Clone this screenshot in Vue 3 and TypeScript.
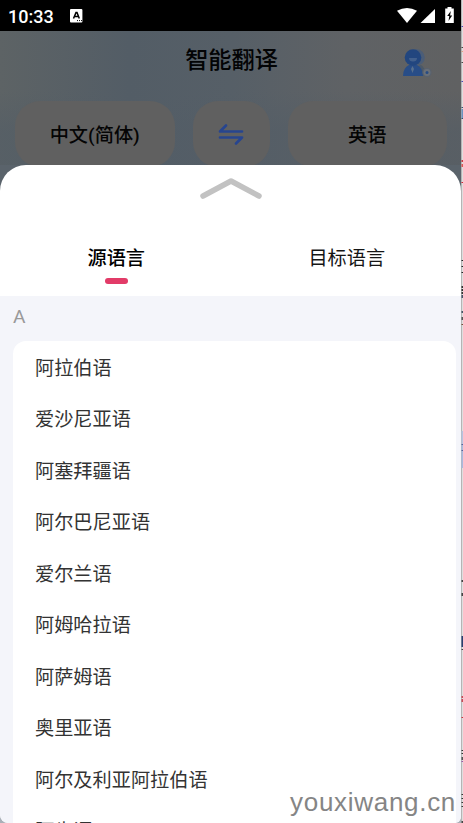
<script setup lang="ts">
const languages: string[] = [
  '阿拉伯语', '爱沙尼亚语', '阿塞拜疆语', '阿尔巴尼亚语', '爱尔兰语',
  '阿姆哈拉语', '阿萨姆语', '奥里亚语', '阿尔及利亚阿拉伯语', '阿肯语',
]
interface Mark { y: number; h: number; c: string }
const marks: Mark[] = [
  { y: 26, h: 1, c: '#4a48b0' }, { y: 47, h: 1, c: '#444' }, { y: 51, h: 1, c: '#d9a184' },
  { y: 62, h: 1, c: '#444' }, { y: 81, h: 1, c: '#4a48b0' }, { y: 107, h: 1, c: '#34506e' },
  { y: 109, h: 9, c: '#6b93bf' }, { y: 118, h: 1, c: '#34506e' }, { y: 160, h: 2, c: '#c93a42' },
  { y: 164, h: 3, c: '#d55' }, { y: 182, h: 1, c: '#d02030' }, { y: 260, h: 1, c: '#222' },
  { y: 266, h: 1, c: '#222' }, { y: 272, h: 1, c: '#222' }, { y: 286, h: 2, c: '#333' },
  { y: 289, h: 2, c: '#333' }, { y: 292, h: 2, c: '#333' }, { y: 295, h: 3, c: '#48536a' },
  { y: 311, h: 2, c: '#456' }, { y: 317, h: 3, c: '#555' }, { y: 324, h: 1, c: '#754c38' },
  { y: 431, h: 13, c: '#b7c3e0' }, { y: 444, h: 1, c: '#5364a0' }, { y: 445, h: 5, c: '#aab9dd' },
  { y: 450, h: 1, c: '#5364a0' }, { y: 451, h: 17, c: '#aab9dd' }, { y: 580, h: 2, c: '#444' },
  { y: 593, h: 3, c: '#444' }, { y: 636, h: 11, c: '#293f70' }, { y: 649, h: 1, c: '#444' },
  { y: 696, h: 2, c: '#c94b58' }, { y: 699, h: 3, c: '#c94b58' }, { y: 717, h: 1, c: '#c92f3c' },
  { y: 750, h: 1, c: '#333' }, { y: 753, h: 1, c: '#333' }, { y: 757, h: 3, c: '#555' },
  { y: 761, h: 1, c: '#95a' }, { y: 794, h: 1, c: '#333' }, { y: 798, h: 1, c: '#333' },
  { y: 802, h: 1, c: '#333' }, { y: 806, h: 1, c: '#333' }, { y: 821, h: 2, c: '#444' },
]
</script>

<template>
  <div class="screen">
    <main class="phone">
      <div class="status">
        <span class="time">10:33</span>
        <svg class="app-badge" width="13" height="14" viewBox="0 0 13 14">
          <rect width="12.4" height="13.4" rx="1" fill="#fff" />
          <path d="M3.5 9.5 6 3.6h1l2.3 5.9M4.5 7.4h4" fill="none" stroke="#000" stroke-width="1.5" />
          <path d="M7 11.6h1m1 0h1m1 0h1" stroke="#000" />
        </svg>
        <svg class="signals" width="58" height="17" viewBox="0 0 58 17">
          <path d="M0 3.8Q10 -1.8 20 3.8L10 16Z" fill="#fff" />
          <path d="M38 2v14H23.5Z" fill="#fff" />
          <path d="M50.5 0h4v1.5h2.3V16h-8.6V1.5h2.3Z" fill="#fff" />
          <path d="M53.8 4 50.2 9h2.1L51.5 14l3.7-5.5h-2.1Z" fill="#000" />
        </svg>
      </div>
      <section class="backdrop">
        <header>
          <h1>智能翻译</h1>
          <svg class="user" width="34" height="34" viewBox="0 0 34 34">
            <circle cx="16.5" cy="11.5" r="8.3" fill="#4b5d77" />
            <path d="M13 30q1-10 8-11 4 2 5 11Z" fill="#4b5968" />
            <path d="M3 30q0-8 6-11h8q6 3 6 11Z" fill="#284d87" />
            <circle cx="13" cy="11.5" r="8.3" fill="#22467f" />
            <path d="M9 12h8q0 3.5-4 3.5T9 12Z" fill="#42608d" />
            <path d="m12.5 20 1.5 3-1.5 4-1.5-4Z" fill="#58708e" />
            <circle cx="27" cy="26.5" r="4.6" fill="#59626e" />
            <circle cx="27" cy="26.5" r="3.4" fill="#6a7078" />
            <circle cx="27" cy="26.5" r="1.5" fill="#284c83" />
          </svg>
        </header>
        <div class="pickers">
          <div class="pill">中文(简体)</div>
          <div class="pill swap">
            <svg width="28" height="24" viewBox="0 0 28 24">
              <path d="M25 9.5H3L9 3.5M3 15.5h22l-6 6" fill="none" stroke="#27458f" stroke-width="2.7" stroke-linecap="round" stroke-linejoin="round" />
            </svg>
          </div>
          <div class="pill">英语</div>
        </div>
      </section>
      <section class="sheet">
        <svg class="handle" width="64" height="25" viewBox="0 0 64 25">
          <path d="M4 21 32 6l28 15" fill="none" stroke="#c2c2c2" stroke-width="5.5" stroke-linecap="round" stroke-linejoin="round" />
        </svg>
        <nav>
          <div class="tab active">源语言</div>
          <div class="tab">目标语言</div>
        </nav>
        <div class="content">
          <div class="letter">A</div>
          <ul>
            <li v-for="name in languages" :key="name">{{ name }}</li>
          </ul>
        </div>
      </section>
    </main>
    <svg class="edge" width="2" height="823" viewBox="0 0 2 823">
      <rect width="2" height="823" fill="#dedede" />
      <rect width="1" height="823" fill="#b5b5b5" />
      <rect v-for="m in marks" :key="m.y" x="0.5" :y="m.y" width="1.5" :height="m.h" :fill="m.c" />
    </svg>
    <div class="watermark">youxiwang.cn</div>
  </div>
</template>

<style>
body { margin: 0; overflow: hidden; background: #a9b0b8; }
</style>

<style scoped>
.screen { position: relative; display: flex; width: 463px; height: 823px; overflow: hidden; font-family: Roboto, "Noto Sans CJK SC", sans-serif; }
.phone { width: 461px; height: 823px; display: flex; flex-direction: column; overflow: hidden; background: #5a636b; border-radius: 0 0 6px 8px; }
.status { height: 31px; flex: none; background: #000; color: #fff; display: flex; align-items: center; box-sizing: border-box; padding: 0 6px 0 8px; }
.time { font-size: 18px; line-height: 31px; font-weight: 500; width: 62px; padding-top: 1px; }
.signals { margin-left: auto; margin-top: -1px; }
.backdrop { height: 134px; flex: none; background: linear-gradient(90deg, #5d6365 0, #535d66 28%, #545e67 50%, #5f6265 75%, #606060 100%); background: linear-gradient(180deg, transparent 45%, #535d6699 75%), linear-gradient(90deg, #5d6365 0, #535d66 28%, #565f67 50%, #5f6265 75%, #606162 100%); }
header { height: 70px; position: relative; }
h1 { margin: 0; padding-left: 2px; text-align: center; font-size: 23.2px; font-weight: 500; line-height: 59px; color: #030405; }
.user { position: absolute; left: 400px; top: 15px; }
.pickers { display: flex; gap: 18px; padding: 0 14px 0 15px; }
.pill { flex: 1; height: 66px; border-radius: 25px; background: #606060; color: #050505; font-size: 19.2px; font-weight: 500; display: flex; align-items: center; justify-content: center; }
.swap { flex: 0 0 77px; }
.sheet { flex: 1; min-height: 0; background: #fff; border-radius: 26px 26px 0 0; display: flex; flex-direction: column; overflow: hidden; }
.handle { display: block; margin: 10px auto 0; flex: none; }
nav { height: 96px; flex: none; display: flex; }
.tab { flex: 1; text-align: center; font-size: 19.2px; line-height: 28px; padding: 45px 0 0 2px; color: #151515; }
.active { font-weight: 500; color: #000; }
.active::after { content: ""; display: block; width: 23px; height: 5.5px; border-radius: 3px; background: #e23b68; margin: 5px auto 0 103px; }
.content { flex: 1; min-height: 0; background: #f4f5fa; padding: 0 5px 0 13px; overflow: hidden; }
.letter { height: 45px; line-height: 41px; color: #999; font-size: 19.2px; }
ul { margin: 0; padding: 2px 22px 0; list-style: none; background: #fff; border-radius: 13px; }
li { height: 51.45px; line-height: 52px; font-size: 19.2px; color: #333; }
.edge { display: block; }
.watermark { position: absolute; right: 7px; top: 787px; font: 26px/30px "Liberation Sans", Arial, sans-serif; letter-spacing: .7px; color: #858585; white-space: nowrap; }
</style>
